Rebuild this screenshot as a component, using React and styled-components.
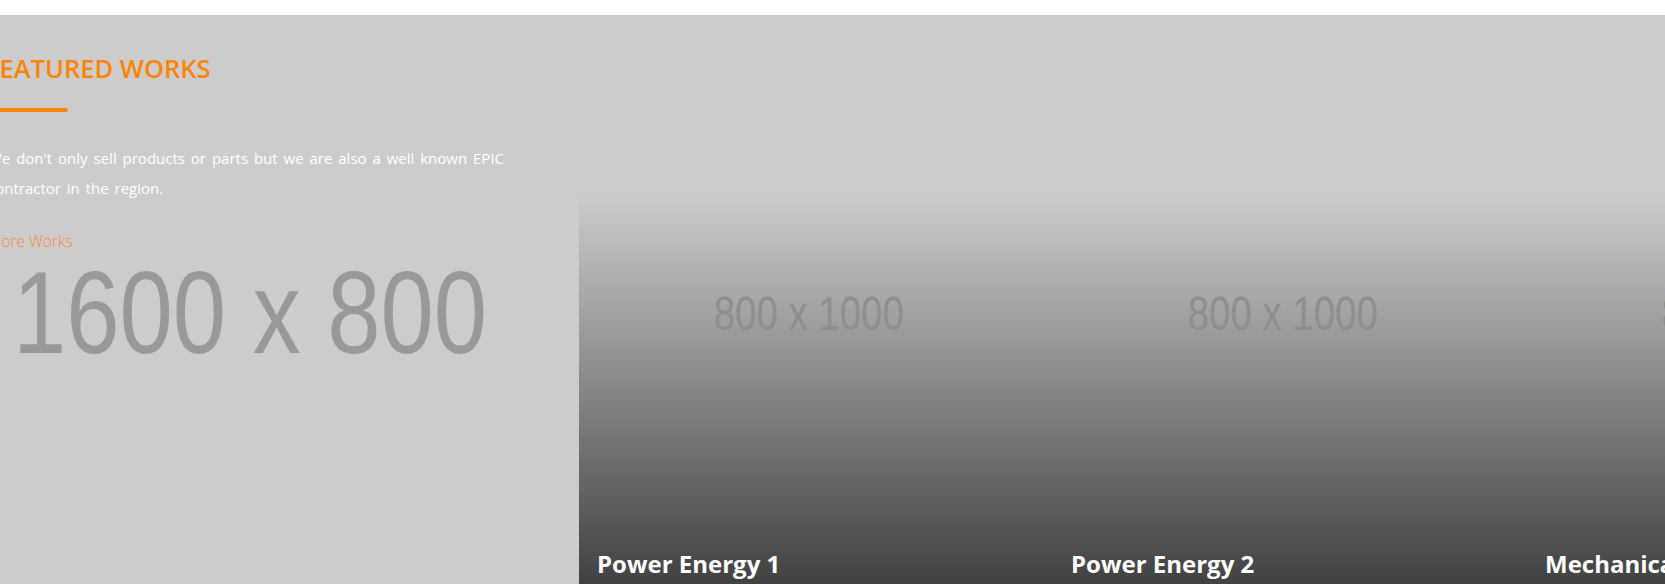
import React from 'react'
import styled, { createGlobalStyle } from 'styled-components'

const colors = {
  orange: '#ff8400',
  orangeLight: '#f98a3c',
  gray: '#cccccc',
  placeholder: '#999999',
  white: '#ffffff',
}

const works = [
  { title: 'Power Energy 1' },
  { title: 'Power Energy 2' },
  { title: 'Mechanical Works' },
  { title: 'Power Energy 3' },
]

const GlobalStyle = createGlobalStyle`
  html, body {
    margin: 0;
    padding: 0;
    background: #ffffff;
    overflow: hidden;
  }
  * {
    box-sizing: border-box;
  }
`

const Page = styled.div`
  padding-top: 15px;
`

const Section = styled.section`
  height: 569px;
  background-color: ${colors.gray};
  display: grid;
  grid-template-columns: 579px 1fr;
  overflow: hidden;
  font-family: "Open Sans", "Noto Sans", sans-serif;
`

const Intro = styled.div`
  width: 525px;
  margin-left: -12px;
  padding-top: 40px;
  display: flex;
  flex-direction: column;
  align-items: flex-start;
`

const Heading = styled.h2`
  margin: 0 0 0 -2px;
  font-size: 25.5px;
  line-height: 26px;
  font-weight: 600;
  color: ${colors.orange};
  text-transform: uppercase;
  white-space: nowrap;
`

const Underline = styled.span`
  display: block;
  width: 80px;
  height: 4px;
  margin-top: 27px;
  border-radius: 2px;
  background-color: ${colors.orange};
`

const Text = styled.p`
  margin: 31px 0 0;
  font-size: 15px;
  line-height: 30px;
  word-spacing: 2px;
  color: ${colors.white};
`

const MoreLink = styled.a`
  margin-top: 24px;
  font-size: 15.5px;
  line-height: 28px;
  font-weight: 300;
  color: ${colors.orangeLight};
  text-decoration: none;
`

const Placeholder = styled.div`
  align-self: stretch;
  display: flex;
  justify-content: center;
  font-family: "Liberation Sans", Arial, sans-serif;
  font-size: 116px;
  line-height: 116px;
  color: ${colors.placeholder};
  white-space: nowrap;
`

const Stretched = styled.span`
  display: inline-block;
  transform: scaleX(${({ scale }) => scale});
`

const Works = styled.div`
  padding-top: 180px;
  display: flex;
  overflow: hidden;
`

const Card = styled.article`
  position: relative;
  flex: 0 0 474px;
  height: 400px;
  padding: 0 18px;
  display: flex;
  flex-direction: column;
  background-color: ${colors.gray};

  &::before {
    content: "";
    position: absolute;
    inset: 0;
    background: linear-gradient(to bottom, rgba(0, 0, 0, 0) 0%, rgba(0, 0, 0, 0.7) 100%);
  }
`

const CardLabel = styled.div`
  padding: 95px 14px 0 0;
  display: flex;
  justify-content: center;
  font-family: "Liberation Sans", Arial, sans-serif;
  font-size: 48px;
  line-height: 48px;
  color: #8f8f8f;
  white-space: nowrap;
`

const CardTitle = styled.h3`
  position: relative;
  z-index: 1;
  margin: 211px 0 0;
  font-size: 24px;
  line-height: 30px;
  font-weight: 700;
  color: ${colors.white};
  white-space: nowrap;
`

export default function App() {
  return (
    <Page>
      <GlobalStyle />
      <Section>
        <Intro>
          <Heading>Featured Works</Heading>
          <Underline />
          <Text>
            We don't only sell products or parts but we are also a well known EPIC contractor in the region.
          </Text>
          <MoreLink href="#">More Works</MoreLink>
          <Placeholder>
            <Stretched scale={0.826}>1600 x 800</Stretched>
          </Placeholder>
        </Intro>
        <Works>
          {works.map((work) => (
            <Card key={work.title}>
              <CardLabel>
                <Stretched scale={0.8}>800 x 1000</Stretched>
              </CardLabel>
              <CardTitle>{work.title}</CardTitle>
            </Card>
          ))}
        </Works>
      </Section>
    </Page>
  )
}
